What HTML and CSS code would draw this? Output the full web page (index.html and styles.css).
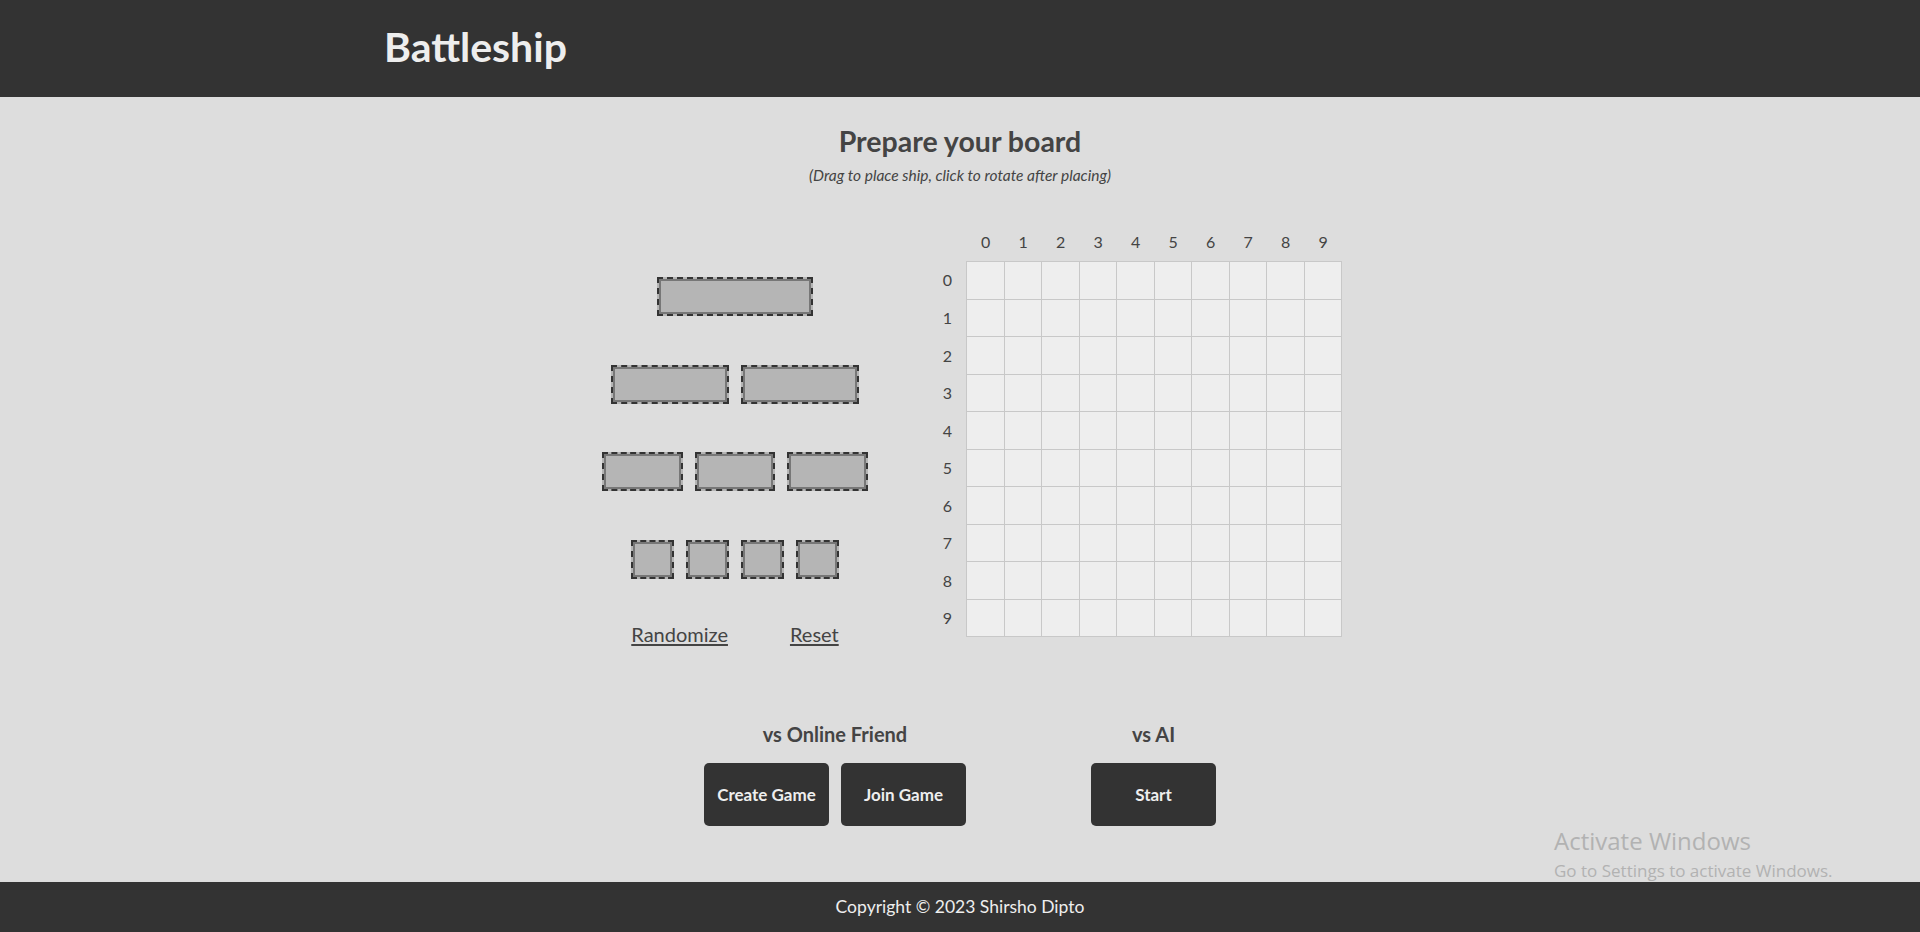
FILE: index.html
```html
<!DOCTYPE html>
<html lang="en">
<head>
<meta charset="utf-8">
<title>Battleship</title>
<link rel="stylesheet" href="styles.css">
</head>
<body>
<header class="site-header">
  <div class="container">
    <h1 class="logo">Battleship</h1>
  </div>
</header>
<main class="main">
  <h2 class="title">Prepare your board</h2>
  <p class="subtitle">(Drag to place ship, click to rotate after placing)</p>

  <section class="setup">
    <div class="ship-panel">
      <div class="ship-row">
        <div class="ship s4"></div>
      </div>
      <div class="ship-row">
        <div class="ship s3"></div>
        <div class="ship s3"></div>
      </div>
      <div class="ship-row">
        <div class="ship s2"></div>
        <div class="ship s2"></div>
        <div class="ship s2"></div>
      </div>
      <div class="ship-row">
        <div class="ship s1"></div>
        <div class="ship s1"></div>
        <div class="ship s1"></div>
        <div class="ship s1"></div>
      </div>
      <div class="links">
        <a class="link" href="#">Randomize</a>
        <a class="link" href="#">Reset</a>
      </div>
    </div>

    <div class="board" id="board"></div>
  </section>

  <section class="modes">
    <div class="mode">
      <h3 class="mode-title">vs Online Friend</h3>
      <div class="mode-buttons">
        <button class="btn">Create Game</button>
        <button class="btn">Join Game</button>
      </div>
    </div>
    <div class="mode">
      <h3 class="mode-title">vs AI</h3>
      <div class="mode-buttons">
        <button class="btn">Start</button>
      </div>
    </div>
  </section>
</main>
<footer class="site-footer">
  <p class="copyright">Copyright © 2023 Shirsho Dipto</p>
</footer>
<div class="watermark">
  <div class="wm-title">Activate Windows</div>
  <div class="wm-sub">Go to Settings to activate Windows.</div>
</div>
<script>
  var b = document.getElementById('board');
  var html = '<div class="corner"></div>';
  for (var c = 0; c < 10; c++) html += '<div class="label col-label">' + c + '</div>';
  for (var r = 0; r < 10; r++) {
    html += '<div class="label row-label">' + r + '</div>';
    for (var k = 0; k < 10; k++) {
      var cls = 'cell';
      if (r === 0) cls += ' top';
      if (k === 0) cls += ' left';
      html += '<div class="' + cls + '"></div>';
    }
  }
  b.innerHTML = html;
</script>
</body>
</html>
```

FILE: styles.css
```css
* { box-sizing: border-box; }

html, body {
  margin: 0;
  padding: 0;
}

body {
  font-family: Lato, "Open Sans", sans-serif;
  background: #dddddd;
  color: #444444;
  min-height: 100vh;
  display: flex;
  flex-direction: column;
  position: relative;
}

.site-header {
  background: #333333;
  height: 97px;
  flex: none;
}

.container {
  width: 60%;
  margin: 0 auto;
}

.logo {
  margin: 0;
  padding-top: 23px;
  font-size: 41px;
  line-height: 48px;
  font-weight: 700;
  color: #eeeeee;
}

.main {
  flex: 1;
  display: flex;
  flex-direction: column;
  align-items: center;
}

.title {
  margin: 27px 0 0;
  font-size: 28.5px;
  line-height: 35px;
  font-weight: 700;
  color: #444444;
}

.subtitle {
  margin: 6.5px 0 0;
  font-size: 15.5px;
  line-height: 19px;
  font-style: italic;
  color: #444444;
}

.setup {
  margin-top: 39px;
  display: flex;
  align-items: flex-start;
  gap: 37px;
}

.ship-panel {
  width: 314px;
  padding-top: 53.5px;
  display: flex;
  flex-direction: column;
  align-items: center;
}

.ship-row {
  display: flex;
  justify-content: center;
  gap: 12px;
  height: 39px;
  margin-bottom: 48.5px;
}

.ship-row:nth-child(4) {
  margin-bottom: 0;
}

.ship {
  height: 39px;
  border: 2px dashed #333333;
  background: #b5b5b5;
  box-shadow: inset 0 0 0 2px #777777;
}

.s1 { width: 43px; }
.s2 { width: 80.5px; }
.s3 { width: 118px; }
.s4 { width: 155.5px; }

.links {
  margin-top: 43.5px;
  display: flex;
  gap: 62px;
  justify-content: center;
}

.link {
  font-size: 20px;
  line-height: 24px;
  color: #444444;
  text-decoration: underline;
  text-underline-offset: 2px;
}

.board {
  display: grid;
  grid-template-columns: 37px 38.5px repeat(9, 37.5px);
  grid-template-rows: 37.5px 38.5px repeat(9, 37.5px);
}

.label {
  display: flex;
  align-items: center;
  justify-content: center;
  font-size: 16px;
  line-height: 19px;
  color: #444444;
  padding-bottom: 1px;
}

.col-label:nth-child(2) { padding-left: 1px; }

.cell {
  background: #eeeeee;
  border-right: 1px solid #c8c8c8;
  border-bottom: 1px solid #c8c8c8;
}

.cell.left { border-left: 1px solid #c8c8c8; }
.cell.top { border-top: 1px solid #c8c8c8; }

.modes {
  margin-top: 75.5px;
  display: flex;
  gap: 125px;
}

.mode {
  display: flex;
  flex-direction: column;
  align-items: center;
}

.mode-title {
  margin: 0;
  font-size: 20px;
  line-height: 24px;
  font-weight: 700;
  color: #444444;
}

.mode-buttons {
  margin-top: 17px;
  display: flex;
  gap: 12px;
}

.btn {
  width: 125px;
  height: 63px;
  border: none;
  border-radius: 5px;
  background: #333333;
  color: #eeeeee;
  font-family: Lato, "Open Sans", sans-serif;
  font-size: 17px;
  font-weight: 700;
  cursor: pointer;
  padding: 0;
}

.site-footer {
  background: #333333;
  height: 50px;
  flex: none;
  display: flex;
  align-items: center;
  justify-content: center;
  position: relative;
  z-index: 2;
}

.copyright {
  margin: 0;
  font-size: 17.5px;
  line-height: 22px;
  color: #eeeeee;
}

.watermark {
  position: absolute;
  left: 1554px;
  top: 826px;
  z-index: 1;
  font-family: "Open Sans", "Noto Sans", sans-serif;
  color: #b2b2b2;
  white-space: nowrap;
}

.wm-title {
  font-size: 24px;
  line-height: 30px;
}

.wm-sub {
  margin-top: 4px;
  font-size: 17px;
  line-height: 22px;
}
```
